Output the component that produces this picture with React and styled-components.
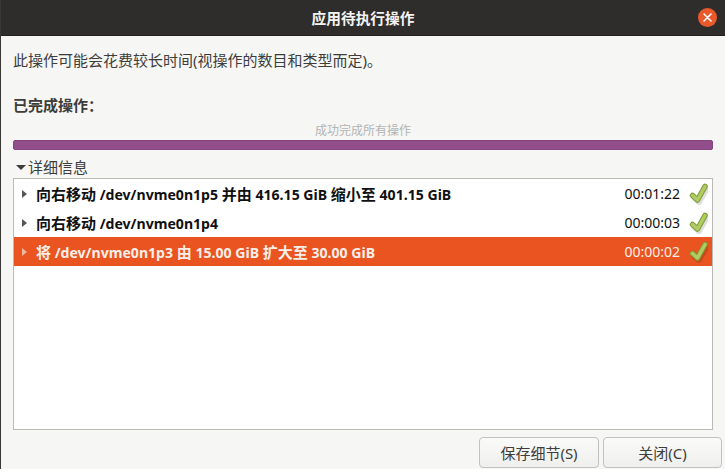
import React from "react";
import styled, { createGlobalStyle } from "styled-components";

const Global = createGlobalStyle`
  html, body { margin: 0; padding: 0; background: #f6f6f6; }
  body { font-family: "Noto Sans", "Noto Sans CJK SC", sans-serif; overflow: hidden; }
`;
const Window = styled.div`
  width: 725px; height: 469px; display: flex; flex-direction: column;
  background: #f6f6f5; border-left: 1px solid #3a3835; box-sizing: border-box; overflow: hidden;
`;
const TitleBar = styled.header`
  height: 36px; flex: none; background: #2f2d2c; color: #f4f3f1; position: relative;
  display: flex; align-items: center; justify-content: center;
  font-size: 14.7px; font-weight: 700; border-bottom: 1px solid #23211f; box-sizing: border-box;
`;
const CloseButton = styled.div`
  position: absolute; right: 8px; top: 8px; width: 19px; height: 19px; border-radius: 50%;
  background: #e9592a; display: flex; align-items: center; justify-content: center;
`;
const Content = styled.main`
  flex: 1; display: flex; flex-direction: column; padding: 0 12px 0 12px; min-height: 0;
`;
const Description = styled.p`
  margin: 14px 0 0; height: 20px; line-height: 20px; font-size: 15px; color: #3d3d3b;
`;
const SectionLabel = styled.h2`
  margin: 25px 0 0; height: 20px; line-height: 20px; font-size: 15px; font-weight: 700; color: #3d3d3b;
`;
const ProgressText = styled.div`
  margin-top: 9px; height: 14px; line-height: 14px; font-size: 12px; color: #b4b4b2; text-align: center;
`;
const ProgressBar = styled.div`
  margin-top: 2px; height: 10px; flex: none; border-radius: 2px; background: #924d8b;
  border: 1px solid #85447e; box-sizing: border-box;
`;
const Expander = styled.div`
  margin-top: 7px; height: 20px; display: flex; align-items: center; gap: 2px;
  font-size: 15px; color: #3d3d3b; line-height: 20px;
`;
const DownArrow = styled.span`
  width: 0; height: 0; margin: 0 0 0 3px; border-left: 5px solid transparent; border-right: 5px solid transparent;
  border-top: 5px solid #3d3d3b;
`;
const List = styled.ul`
  list-style: none; margin: 1px 0 0; padding: 0; height: 252px; flex: none; box-sizing: border-box;
  width: 700px; background: #fff; border: 1px solid #bcbab6;
`;
const Row = styled.li`
  height: 29px; display: flex; align-items: center; padding: 0 4px 0 8px; box-sizing: border-box;
  font-size: 14.1px; font-weight: 700; color: ${p => (p.$selected ? "#fbeee8" : "#101010")};
  background: ${p => (p.$selected ? "#e95420" : "#fff")};
`;
const RowArrow = styled.span`
  width: 0; height: 0; flex: none; border-top: 4px solid transparent; border-bottom: 4px solid transparent;
  border-left: 5px solid ${p => (p.$selected ? "#f3b49f" : "#555")};
  margin-right: 9px;
`;
const RowText = styled.span`
  flex: 1; white-space: nowrap;
`;
const Han = styled.span`
  font-size: 15px;
`;
const Time = styled.span`
  font-weight: 400; font-size: 14px; margin-right: 9px;
`;
const Footer = styled.footer`
  display: flex; justify-content: flex-end; gap: 4px; margin-top: 7px; margin-right: -9px;
`;
const Button = styled.button`
  width: ${p => p.$w}px; height: 31px; padding: 0; border: 1px solid #c3c1bc; border-radius: 4px;
  background: linear-gradient(#fafaf9, #efefed); color: #3d3d3b;
  font: 400 15px "Noto Sans", "Noto Sans CJK SC", sans-serif;
`;

const Check = () => (
  <svg width="19" height="22" viewBox="0 0 19 22" style={{ flex: "none" }}>
    <path d="M3.5 13.5 L8.5 18 L16 5" transform="translate(1.5 1.5)" fill="none" stroke="#000" strokeOpacity="0.13" strokeWidth="5.5" strokeLinecap="round" strokeLinejoin="round" />
    <path d="M3.5 12.5 L8.5 17 L16 3.5" fill="none" stroke="#7f9c36" strokeWidth="5.5" strokeLinecap="round" strokeLinejoin="round" />
    <path d="M3.5 12.5 L8.5 17 L16 3.5" fill="none" stroke="#b0cb64" strokeWidth="3.5" strokeLinecap="round" strokeLinejoin="round" />
  </svg>
);

const rows = [
  { text: "向右移动 /dev/nvme0n1p5 并由 416.15 GiB 缩小至 401.15 GiB", time: "00:01:22" },
  { text: "向右移动 /dev/nvme0n1p4", time: "00:00:03" },
  { text: "将 /dev/nvme0n1p3 由 15.00 GiB 扩大至 30.00 GiB", time: "00:00:02", selected: true },
];

const withHan = text =>
  text.split(/([\u4e00-\u9fff]+)/).map((part, i) => (i % 2 ? <Han key={i}>{part}</Han> : part));

export default function App() {
  return (
    <Window>
      <Global />
      <TitleBar>
        应用待执行操作
        <CloseButton>
          <svg width="9" height="9" viewBox="0 0 9 9">
            <path d="M1 1 L8 8 M8 1 L1 8" stroke="#fff" strokeWidth="1.6" strokeLinecap="round" />
          </svg>
        </CloseButton>
      </TitleBar>
      <Content>
        <Description>此操作可能会花费较长时间(视操作的数目和类型而定)。</Description>
        <SectionLabel>已完成操作：</SectionLabel>
        <ProgressText>成功完成所有操作</ProgressText>
        <ProgressBar />
        <Expander><DownArrow />详细信息</Expander>
        <List>
          {rows.map(r => (
            <Row key={r.time} $selected={r.selected}>
              <RowArrow $selected={r.selected} />
              <RowText>{withHan(r.text)}</RowText>
              <Time>{r.time}</Time>
              <Check />
            </Row>
          ))}
        </List>
        <Footer>
          <Button $w={120}>保存细节(S)</Button>
          <Button $w={119}>关闭(C)</Button>
        </Footer>
      </Content>
    </Window>
  );
}
